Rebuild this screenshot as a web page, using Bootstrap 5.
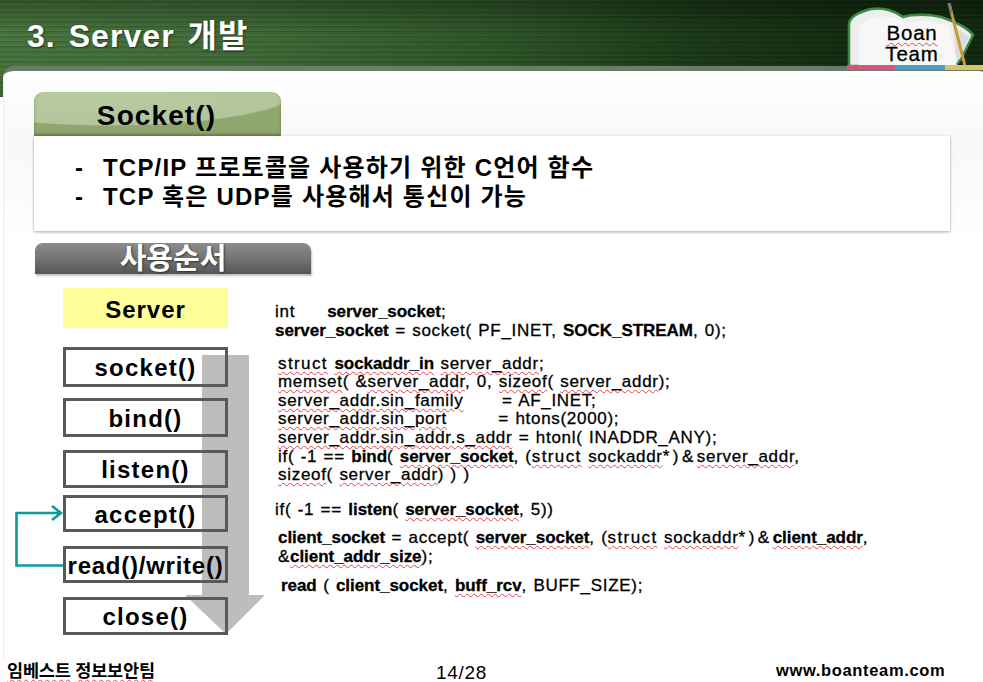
<!DOCTYPE html>
<html lang="ko">
<head>
<meta charset="utf-8">
<title>3. Server 개발</title>
<link rel="stylesheet" href="https://cdn.jsdelivr.net/npm/bootstrap@5.3.0/dist/css/bootstrap.min.css">
<style>
html,body{margin:0;background:#fff;}
body{font-family:"Liberation Sans","Noto Sans CJK KR",sans-serif;color:#000;}
.slide-frame{width:983px;height:682px;position:relative;overflow:hidden;background:#fff;}
.slide-head{height:97px;padding:17px 0 0 27px;
 background:
  repeating-linear-gradient(0deg,rgba(0,0,0,.13) 0 1px,rgba(255,255,255,.03) 1px 2px,transparent 2px 4px,rgba(0,0,0,.06) 4px 5px),
  linear-gradient(180deg,rgba(0,0,0,.28) 0,rgba(0,0,0,0) 35%,rgba(0,0,0,.03) 70%,rgba(0,0,0,.15) 100%),
  linear-gradient(90deg,#47753e 0,#3f6b37 25%,#2e5528 50%,#1b3a17 70%,#132d10 85%,#11290f 100%);}
.slide-title{font-size:32px;line-height:38px;font-weight:700;letter-spacing:1.05px;word-spacing:3px;color:#fff;margin:0;text-shadow:1px 1px 2px rgba(0,0,0,.5);}
.sheet{margin:-31px 0 0 3px;height:594px;border-top:5px solid #6b7d68;border-radius:11px 6px 0 0;
 background:linear-gradient(180deg,#fff 0,#f8f8f8 12%,#fff 30%);padding:21px 0 0 31px;position:relative;
 box-shadow:inset 1px 0 0 #efefef;}
.strip-pink,.strip-blue,.strip-gold{position:absolute;top:-6px;height:5px;}
.strip-pink{left:844px;width:48px;background:#d9517f;}
.strip-blue{left:892px;width:50px;background:#4d9dcb;}
.strip-gold{left:942px;width:38px;background:#d8c26c;}
.tab-green{width:247px;height:44px;border-radius:9px 9px 0 0;
 background:radial-gradient(ellipse 190px 34px at 30% 0,#b9cba0 0,#b3c69b 96%,transparent 100%),#8fa66f;
 font-size:28px;font-weight:700;line-height:48px;text-align:center;letter-spacing:1.1px;box-shadow:inset 0 -2px 3px rgba(70,90,40,.5);position:relative;padding-right:2px;}
.info-box{width:916px;height:95px;background:#fff;box-shadow:0 1px 3px rgba(0,0,0,.35);padding:17px 0 0 41px;font-size:24px;line-height:29px;font-weight:700;position:relative;letter-spacing:1.2px;}
.info-box .dash{display:inline-block;width:28px;}
.bar-gray{width:276px;height:31px;margin:12px 0 0 1px;border-radius:8px 8px 0 0;background:linear-gradient(180deg,#8c8c8c 0,#777 45%,#555 100%);color:#fff;font-size:29px;line-height:33px;font-weight:700;text-align:center;text-shadow:1px 1px 2px #333;box-shadow:1px 2px 2px rgba(0,0,0,.25);}
.flow-col{width:165px;margin:14px 0 0 29px;position:relative;flex:none;}
.flow-art{position:absolute;left:-63px;top:-288px;width:983px;height:682px;}
.step{position:relative;border:3px solid #595959;font-size:24px;font-weight:700;text-align:center;letter-spacing:1.25px;white-space:nowrap;color:#000;}
.s1{height:40px;line-height:35px;}
.s2{height:39px;margin-top:11px;line-height:36px;}
.s3{height:38px;margin-top:13px;line-height:34px;}
.s4{height:37px;margin-top:7px;line-height:34px;}
.s5{height:37px;margin-top:14px;line-height:34px;letter-spacing:.75px;}
.s6{height:38px;margin-top:14px;line-height:34px;}
.step-server{position:relative;height:40px;background:#ffff99;font-size:24px;font-weight:700;line-height:44px;text-align:center;letter-spacing:1px;margin-bottom:19px;}
.code-col{margin:29px 0 0 47px;font-size:17px;line-height:18.6px;letter-spacing:.7px;word-spacing:1px;-webkit-text-stroke:.3px #000;flex:none;position:relative;}
.code-col>div{white-space:pre;}
.code-col b{letter-spacing:-.05px;}
.sq{text-decoration:underline wavy #e8404a 1px;text-underline-offset:2px;}
.wide-word{letter-spacing:1.4px;}
.star-gap{letter-spacing:3.5px;}
.code-a{margin-top:14.500px;margin-left:3px;}
.code-b{margin-top:16px;}
.code-c{margin-top:10px;margin-left:3px;}
.code-d{margin-top:10px;margin-left:6px;}
.foot-row{height:22px;padding:0 37px 0 7px;}
.foot-l{font-size:17.5px;font-weight:700;width:429px;line-height:22px;letter-spacing:-.2px;}
.foot-c{font-size:19px;line-height:18px;width:340px;letter-spacing:.7px;padding-top:4px;}
.foot-r{font-size:16.5px;font-weight:700;line-height:20px;letter-spacing:.65px;}
.book-logo{position:absolute;left:845px;top:3px;width:135px;height:64px;}
.book-text{position:absolute;left:873px;top:22px;width:78px;text-align:center;font-size:20.5px;line-height:21px;letter-spacing:.8px;-webkit-text-stroke:.3px #000;}
</style>
</head>
<body>
<div class="slide-frame">
 <header class="slide-head"><h1 class="slide-title">3. Server 개발</h1></header>
 <svg class="book-logo" viewBox="0 0 135 64" aria-hidden="true">
  <path d="M4 63V22C4 14 14 9 26 6C38 4 50 8 58 14C68 11 84 11 96 14C108 18 122 24 128 32L116 56L110 63Z" fill="#eee" stroke="#3c8a45" stroke-width="2.5"/>
  <path d="M14 63V24C20 16 34 12 46 14C54 15 58 18 60 22C72 16 92 18 104 24L112 63Z" fill="#f7f7f7"/>
  <path d="M108 22L124 34L112 60Z" fill="#dcdcdc"/>
  <path d="M104 0L120 63" stroke="#c99a2e" stroke-width="3"/>
  <path d="M104 0L106.500 10" stroke="#777" stroke-width="3"/>
 </svg>
 <div class="book-text"><span class="sq">Boan</span><br>Team</div>
 <main class="sheet">
  <div class="strip-pink"></div><div class="strip-blue"></div><div class="strip-gold"></div>
  <div class="tab-green">Socket()</div>
  <div class="info-box">
   <div><span class="dash">-</span>TCP/IP 프로토콜을 사용하기 위한 C언어 함수</div>
   <div><span class="dash">-</span>TCP 혹은 UDP를 사용해서 통신이 가능</div>
  </div>
  <div class="bar-gray">사용순서</div>
  <div class="d-flex">
   <div class="flow-col">
    <svg class="flow-art" viewBox="0 0 983 682" aria-hidden="true">
     <path d="M202 355H249V595H265L226 634L185 595H202Z" fill="#bdbdbd"/>
     <path d="M64 565.500H16.500V513H60M52 506L61 513L52 520" fill="none" stroke="#0d9a9a" stroke-width="2.600"/>
    </svg>
    <div class="step-server">Server</div>
    <div class="step s1">socket()</div>
    <div class="step s2">bind()</div>
    <div class="step s3">listen()</div>
    <div class="step s4">accept()</div>
    <div class="step s5">read()/write()</div>
    <div class="step s6">close()</div>
   </div>
   <div class="code-col">
<div>int     <b>server_socket</b>;
<b>server_socket</b> = socket( PF_INET, <b>SOCK_STREAM</b>, 0);</div>
<div class="code-a"><span class="sq wide-word">struct</span> <b class="sq">sockaddr_in</b> <span class="sq">server_addr</span>;
<span class="sq">memset</span>( &amp;<span class="sq">server_addr</span>, 0, <span class="sq">sizeof</span>( <span class="sq">server_addr</span>);
<span class="sq">server_addr.sin_family</span>      = AF_INET;
<span class="sq">server_addr.sin_port</span>        = htons(2000);
<span class="sq">server_addr.sin_addr.s_addr</span> = htonl( INADDR_ANY);
if( -1 == <b>bind</b>( <b class="sq">server_socket</b>, (<span class="sq wide-word">struct</span> <span class="sq">sockaddr</span><span class="star-gap">*)&amp;</span><span class="sq">server_addr</span>,
<span class="sq">sizeof</span>( <span class="sq">server_addr</span>) ) )</div>
<div class="code-b">if( -1 == <b>listen</b>( <b class="sq">server_socket</b>, 5))</div>
<div class="code-c"><b>client_socket</b> = accept( <b class="sq">server_socket</b>, (<span class="sq wide-word">struct</span> <span class="sq">sockaddr</span><span class="star-gap">*)&amp;</span><b class="sq">client_addr</b>,
&amp;<b class="sq">client_addr_size</b>);</div>
<div class="code-d"><b>read</b> ( <b>client_socket</b>, <b class="sq">buff_rcv</b>, BUFF_SIZE);</div>
   </div>
  </div>
 </main>
 <footer class="foot-row d-flex align-items-start">
  <div class="foot-l"><span class="sq">임베스트</span> <span class="sq">정보보안팀</span></div>
  <div class="foot-c">14/28</div>
  <div class="foot-r">www.boanteam.com</div>
 </footer>
</div>
<script src="https://cdn.jsdelivr.net/npm/bootstrap@5.3.0/dist/js/bootstrap.bundle.min.js"></script>
</body>
</html>
